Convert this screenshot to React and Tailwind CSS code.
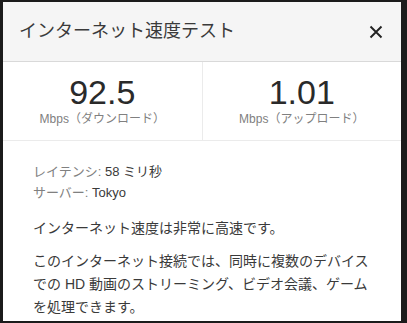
// Internet speed test result card (Japanese), inside a dark window frame.
const font = "font-['Liberation_Sans','Noto_Sans_CJK_JP',sans-serif]";

function Stat({ value, label }) {
  return (
    <div className="flex-1 flex flex-col items-center pt-[13px]">
      <span className="text-[34px] leading-[34px] text-[#2a2a2a]">{value}</span>
      <span className="mt-[2px] text-[12px] leading-[16px] text-[#808080]">{label}</span>
    </div>
  );
}

export default function App() {
  return (
    <div className={`w-[407px] h-[323px] bg-[#1b1b1b] pt-[2px] pl-[3px] pr-[6px] pb-[2px] ${font}`}>
      <div className="h-full bg-white flex flex-col overflow-hidden">
        {/* Header */}
        <header className="h-[60px] flex items-center justify-between pl-[16px] pr-[18px] bg-[#f5f5f5] border-b border-[#d9d9d9]">
          <span className="text-[18px] text-[#3a3a3a]">インターネット速度テスト</span>
          <svg width="14" height="14" viewBox="0 0 14 14" className="text-[#222]">
            <path d="M1.5 1.5 L12.5 12.5 M12.5 1.5 L1.5 12.5" stroke="currentColor" strokeWidth="1.9" />
          </svg>
        </header>

        {/* Speeds */}
        <div className="h-[79px] flex border-b border-[#ebebeb]">
          <Stat value="92.5" label="Mbps（ダウンロード）" />
          <div className="w-px bg-[#ebebeb]" />
          <Stat value="1.01" label="Mbps（アップロード）" />
        </div>

        {/* Details */}
        <div className="pl-[30px] pt-[20px]">
          <div className="text-[13px] leading-[21px]">
            <div>
              <span className="text-[#808080]">レイテンシ: </span>
              <span className="text-[#3a3a3a]">58 ミリ秒</span>
            </div>
            <div>
              <span className="text-[#808080]">サーバー: </span>
              <span className="text-[#3a3a3a]">Tokyo</span>
            </div>
          </div>
          <p className="mt-[14px] text-[14px] leading-[23px] text-[#3a3a3a]">
            インターネット速度は非常に高速です。
          </p>
          <p className="mt-[10px] text-[14px] leading-[23px] text-[#3a3a3a] whitespace-nowrap">
            このインターネット接続では、同時に複数のデバイス
            <br />
            での HD 動画のストリーミング、ビデオ会議、ゲーム
            <br />
            を処理できます。
          </p>
        </div>
      </div>
    </div>
  );
}
